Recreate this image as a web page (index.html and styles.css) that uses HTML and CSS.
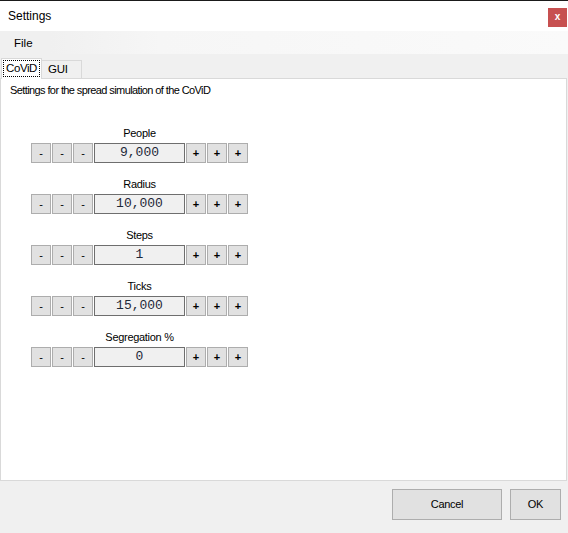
FILE: index.html
```html
<!DOCTYPE html>
<html>
<head>
<meta charset="utf-8">
<link rel="stylesheet" href="styles.css">
</head>
<body>
<div class="window">
  <div class="titlebar">
    <span class="title">Settings</span>
    <span class="close">x</span>
  </div>
  <div class="menubar"><span class="menu-item">File</span></div>
  <div class="tabstrip">
    <div class="tab active"><span class="focus">CoViD</span></div>
    <div class="tab">GUI</div>
  </div>
  <div class="panel">
    <div class="desc">Settings for the spread simulation of the CoViD</div>
    <div class="groups">
      <div class="group">
        <div class="label">People</div>
        <div class="row">
          <span class="btn minus">-</span><span class="btn minus">-</span><span class="btn minus">-</span>
          <span class="box">9,000</span>
          <span class="btn">+</span><span class="btn">+</span><span class="btn">+</span>
        </div>
      </div>
      <div class="group">
        <div class="label">Radius</div>
        <div class="row">
          <span class="btn minus">-</span><span class="btn minus">-</span><span class="btn minus">-</span>
          <span class="box">10,000</span>
          <span class="btn">+</span><span class="btn">+</span><span class="btn">+</span>
        </div>
      </div>
      <div class="group">
        <div class="label">Steps</div>
        <div class="row">
          <span class="btn minus">-</span><span class="btn minus">-</span><span class="btn minus">-</span>
          <span class="box">1</span>
          <span class="btn">+</span><span class="btn">+</span><span class="btn">+</span>
        </div>
      </div>
      <div class="group">
        <div class="label">Ticks</div>
        <div class="row">
          <span class="btn minus">-</span><span class="btn minus">-</span><span class="btn minus">-</span>
          <span class="box">15,000</span>
          <span class="btn">+</span><span class="btn">+</span><span class="btn">+</span>
        </div>
      </div>
      <div class="group">
        <div class="label">Segregation %</div>
        <div class="row">
          <span class="btn minus">-</span><span class="btn minus">-</span><span class="btn minus">-</span>
          <span class="box">0</span>
          <span class="btn">+</span><span class="btn">+</span><span class="btn">+</span>
        </div>
      </div>
    </div>
  </div>
  <div class="footer">
    <span class="dlg-btn cancel">Cancel</span>
    <span class="dlg-btn ok">OK</span>
  </div>
</div>
</body>
</html>
```

FILE: styles.css
```css
html, body {
  margin: 0;
  padding: 0;
  background: #f0f0f0;
}
body {
  font-family: "Liberation Sans", Arial, sans-serif;
  font-size: 11px;
  color: #000;
}
.window {
  width: 568px;
  height: 533px;
  display: flex;
  flex-direction: column;
  overflow: hidden;
}
.titlebar {
  height: 30px;
  border-top: 1px solid #1a1a1a;
  background: #fff;
  display: flex;
  align-items: flex-start;
  justify-content: space-between;
  padding-left: 8px;
  padding-right: 1px;
}
.title {
  font-size: 12px;
  line-height: 14px;
  margin-top: 8px;
}
.close {
  width: 19px;
  height: 19px;
  margin-top: 7px;
  background: #c75050;
  color: #fff;
  font-weight: bold;
  font-size: 10px;
  line-height: 17px;
  text-align: center;
}
.menubar {
  height: 23px;
  background: linear-gradient(to right, #f0f0f0 0, #f0f0f0 50px, #f6f6f6 160px, #fafafa 100%);
  display: flex;
  align-items: center;
}
.menu-item {
  margin-left: 14px;
  font-size: 11.5px;
  line-height: 14px;
  margin-top: 1px;
}
.tabstrip {
  height: 24px;
  display: flex;
  align-items: flex-end;
  padding-left: 1px;
  background: #f0f0f0;
}
.tab {
  height: 17px;
  width: 33px;
  border: 1px solid #d9d9d9;
  border-bottom: none;
  background: #f0f0f0;
  font-size: 11.5px;
  line-height: 17px;
  padding-left: 6px;
  box-sizing: content-box;
  letter-spacing: -0.3px;
}
.tab.active {
  height: 20px;
  width: 39px;
  padding-left: 0;
  background: #fff;
  position: relative;
  z-index: 1;
  margin-bottom: -1px;
  display: flex;
  align-items: flex-start;
  justify-content: center;
}
.tab.active + .tab {
  border-left: none;
}
.focus {
  margin-top: 1px;
  padding: 0 2px;
  line-height: 15px;
  border: 1px dotted #000;
  letter-spacing: -0.4px;
}
.panel {
  width: 565px;
  height: 401px;
  border: 1px solid #d9d9d9;
  background: #fff;
  display: flex;
  flex-direction: column;
}
.desc {
  margin-top: 4px;
  margin-left: 9px;
  line-height: 14px;
  letter-spacing: -0.6px;
}
.groups {
  margin-top: 29px;
  margin-left: 30px;
  display: flex;
  flex-direction: column;
  gap: 14px;
  width: 217px;
}
.group {
  display: flex;
  flex-direction: column;
  gap: 3px;
}
.label {
  text-align: center;
  line-height: 14px;
  letter-spacing: -0.3px;
}
.row {
  display: flex;
  gap: 1px;
  height: 20px;
}
.btn {
  width: 18px;
  height: 18px;
  border: 1px solid #adadad;
  background: #e1e1e1;
  font-size: 11px;
  font-weight: bold;
  line-height: 18px;
  text-align: center;
}
.btn.minus {
  font-weight: normal;
}
.box {
  width: 89px;
  height: 18px;
  border: 1px solid #6e6e6e;
  background: #f0f0f0;
  font-family: "Liberation Mono", "Courier New", monospace;
  font-size: 13px;
  line-height: 18px;
  text-align: center;
  color: #1e2838;
}
.footer {
  flex: 1;
  display: flex;
  justify-content: flex-end;
  align-items: flex-start;
  gap: 8px;
  padding-top: 8px;
  padding-right: 7px;
}
.dlg-btn {
  height: 29px;
  border: 1px solid #adadad;
  background: #e1e1e1;
  line-height: 29px;
  text-align: center;
  letter-spacing: -0.3px;
}
.cancel { width: 108px; }
.ok { width: 49px; }
```
